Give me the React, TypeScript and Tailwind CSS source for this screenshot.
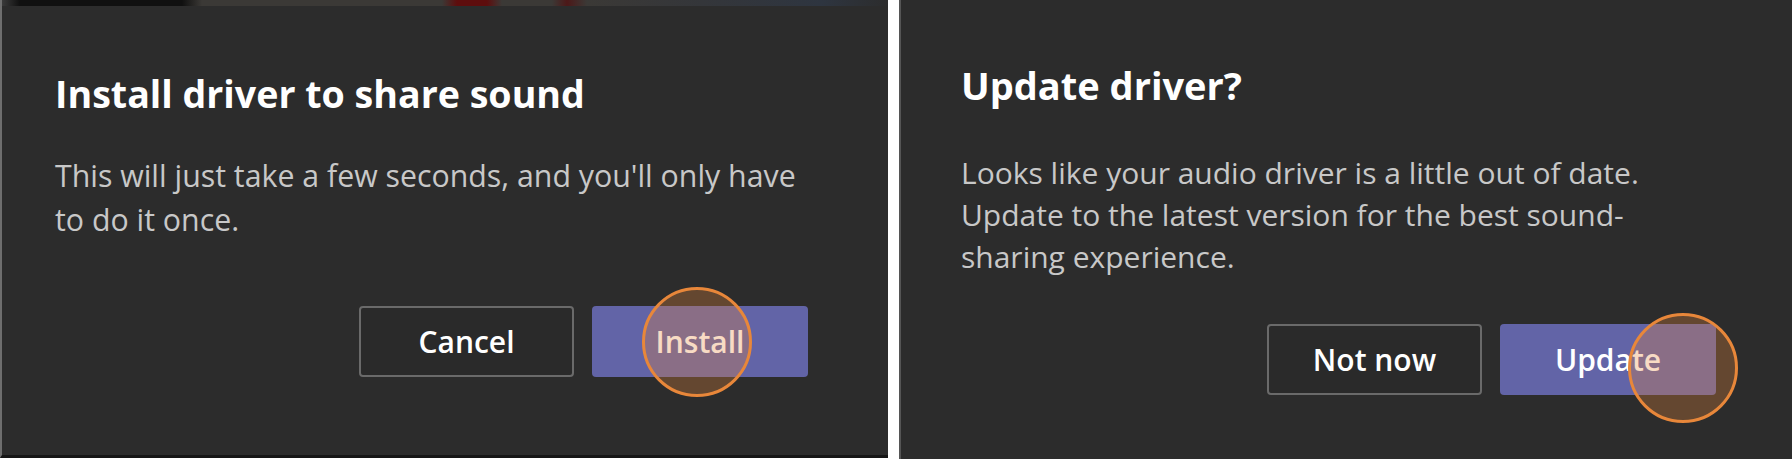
import React from "react";

function Circle({ left, top }: { left: number; top: number }) {
  return (
    <div
      className="pointer-events-none absolute h-[110px] w-[110px] rounded-full border-[3px] border-[#e8873a] bg-[rgba(232,135,58,0.3)]"
      style={{ left, top }}
    />
  );
}

export default function App() {
  return (
    <div className="flex h-[462px] w-[1792px] items-start gap-[11px] bg-white font-['Open_Sans',sans-serif]">
      {/* Left dialog */}
      <div className="flex h-[458px] w-[888px] flex-col border-l-2 border-b-[3px] border-l-[#6e6e6e] border-b-[#161616] bg-[#2c2c2c]">
        <div className="h-[6px] w-full bg-[linear-gradient(90deg,#3a3a3a_0px,#101010_18px,#101010_180px,#3b3936_200px,#3b3936_440px,#5e0d0d_455px,#5e0d0d_485px,#3b3936_500px,#3b3936_550px,#4c1818_565px,#3b3936_585px,#34363a_700px,#2e3540_820px,#2c2c2c_888px)]" />
        <div className="flex flex-1 flex-col pl-[53px] pr-[80px] pt-[69px]">
          <h1 className="whitespace-nowrap text-[37.6px] font-bold leading-[37px] text-white">
            Install driver to share sound
          </h1>
          <p className="mt-[42px] whitespace-nowrap text-[30.3px] leading-[44px] text-[#c8c8c8]">
            This will just take a few seconds, and you'll only have
            <br />
            to do it once.
          </p>
          <div className="mt-[64px] flex justify-end gap-[18px]">
            <button className="h-[71px] w-[215px] rounded-[4px] border-2 border-[#6a6a6a] bg-[#2a2a2a] text-[30px] font-semibold text-white">
              Cancel
            </button>
            <button className="relative h-[71px] w-[216px] rounded-[4px] bg-[#6264a7] text-[30px] font-semibold text-white">
              Install
              <Circle left={50} top={-19} />
            </button>
          </div>
        </div>
      </div>

      {/* Right dialog */}
      <div className="flex h-[459px] flex-1 flex-col border-l-2 border-l-[#555555] bg-[#2c2c2c]">
        <div className="flex flex-1 flex-col pl-[60px] pr-[76px] pt-[67px]">
          <h1 className="whitespace-nowrap text-[38px] font-bold leading-[37px] text-white">
            Update driver?
          </h1>
          <p className="mt-[48px] whitespace-nowrap text-[30px] leading-[42px] text-[#c8c8c8]">
            Looks like your audio driver is a little out of date.
            <br />
            Update to the latest version for the best sound-
            <br />
            sharing experience.
          </p>
          <div className="mt-[46px] flex justify-end gap-[18px]">
            <button className="h-[71px] w-[215px] rounded-[4px] border-2 border-[#6a6a6a] bg-[#2a2a2a] text-[30px] font-semibold text-white">
              Not now
            </button>
            <button className="relative h-[71px] w-[216px] rounded-[4px] bg-[#6264a7] text-[30px] font-semibold text-white">
              Update
              <Circle left={128} top={-11} />
            </button>
          </div>
        </div>
      </div>
    </div>
  );
}
